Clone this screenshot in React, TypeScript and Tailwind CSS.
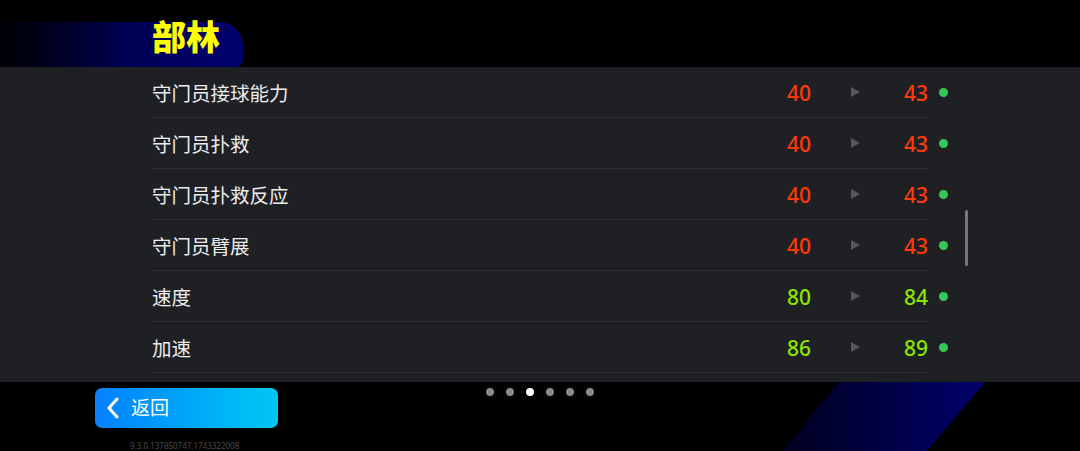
import React from 'react'

type Stat = { name: string; from: number; to: number; tone: 'red' | 'green' }

const stats: Stat[] = [
  { name: '守门员接球能力', from: 40, to: 43, tone: 'red' },
  { name: '守门员扑救', from: 40, to: 43, tone: 'red' },
  { name: '守门员扑救反应', from: 40, to: 43, tone: 'red' },
  { name: '守门员臂展', from: 40, to: 43, tone: 'red' },
  { name: '速度', from: 80, to: 84, tone: 'green' },
  { name: '加速', from: 86, to: 89, tone: 'green' },
]

function StatRow({ stat }: { stat: Stat }) {
  const color = stat.tone === 'red' ? 'text-[#ff3a0a]' : 'text-[#8ae600]'
  return (
    <div className="flex items-center pl-[152px]">
      <div className="flex h-[51px] w-[776px] items-center border-b border-[#303136] pt-[3px]">
        <span className="flex-1 text-[19.5px] text-[#ededed]">{stat.name}</span>
        <span className={`w-[60px] text-right text-[21px] font-medium ${color}`}>{stat.from}</span>
        <span className="ml-[40px] -mt-[3px] h-0 w-0 border-y-[5px] border-l-[9px] border-y-transparent border-l-[#55575c]" />
        <span className={`w-[68px] text-right text-[21px] font-medium ${color}`}>{stat.to}</span>
      </div>
      <span className="ml-[11px] h-[9px] w-[9px] rounded-full bg-[#34c759]" />
    </div>
  )
}

export default function App() {
  return (
    <div
      className="h-[451px] w-[1080px] overflow-hidden bg-black"
      style={{ fontFamily: '"Noto Sans", "Noto Sans CJK SC", sans-serif' }}
    >
      <header className="flex h-[67px] items-end">
        <div className="flex h-[45px] w-[243px] items-center rounded-tr-[24px] rounded-br-[8px] bg-linear-to-r from-[#000006] via-[#000058] via-55% to-[#00006c] pl-[152px]">
          <h1 className="-mt-[16px] text-[34px] font-black leading-none text-[#ffff00]">部林</h1>
        </div>
      </header>

      <section className="relative h-[315px] bg-[#1f2024]">
        {stats.map((s) => (
          <StatRow key={s.name} stat={s} />
        ))}
        <div className="absolute left-[965px] top-[143px] h-[56px] w-[3px] rounded-full bg-[#76777b]" />
      </section>

      <footer className="relative grid h-[69px] grid-cols-[1fr_auto_1fr]">
        <div
          className="absolute left-[783px] top-0 h-[69px] w-[202px] bg-linear-to-r from-[#000020] to-[#00006e]"
          style={{ clipPath: 'polygon(56px 0, 202px 0, 144px 100%, 0 100%)' }}
        />
        <div className="flex flex-col items-start pl-[95px] pt-[6px]">
          <button className="flex h-[40px] w-[183px] items-center gap-[10px] rounded-[7px] bg-linear-to-r from-[#0a80ff] to-[#00c8f0] pl-[10px] text-[19px] text-white">
            <svg width="16" height="22" viewBox="0 0 16 22" fill="none">
              <polyline points="12,2 4,11 12,20" stroke="white" strokeWidth="3" strokeLinecap="round" strokeLinejoin="round" />
            </svg>
            <span>返回</span>
          </button>
          <span className="mt-[13px] pl-[35px] text-[8px] leading-[10px] text-[#4a4a4a]">9.3.0.137850747.1743322008</span>
        </div>
        <div className="flex gap-[12px] pt-[6px]">
          {[0, 1, 2, 3, 4, 5].map((i) => (
            <span key={i} className={`h-[8px] w-[8px] rounded-full ${i === 2 ? 'bg-white' : 'bg-[#8a8a8c]'}`} />
          ))}
        </div>
        <div />
      </footer>
    </div>
  )
}
